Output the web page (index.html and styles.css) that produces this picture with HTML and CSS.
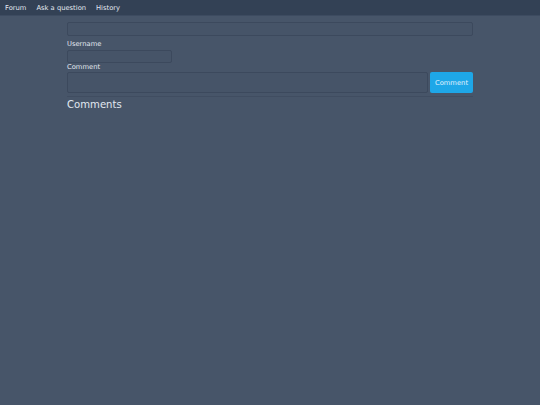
FILE: index.html
```html
<!DOCTYPE html>
<html>
<head>
<meta charset="utf-8">
<link rel="stylesheet" href="styles.css">
</head>
<body>
<nav class="nav">
  <a class="nav-link" href="#">Forum</a>
  <a class="nav-link" href="#">Ask a question</a>
  <a class="nav-link" href="#">History</a>
</nav>
<main class="container">
  <input class="field field-full" type="text">
  <label class="label">Username</label>
  <input class="field field-user" type="text">
  <label class="label label-tight">Comment</label>
  <div class="comment-row">
    <textarea class="field comment-box"></textarea>
    <button class="btn">Comment</button>
  </div>
  <h2 class="heading">Comments</h2>
</main>
</body>
</html>
```
FILE: styles.css
```css
html, body {
  margin: 0;
  padding: 0;
  height: 100%;
}
body {
  background: #475569;
  font-family: "DejaVu Sans", Verdana, sans-serif;
  font-size: 6.75px;
  color: #e2e8f0;
}
.nav {
  display: flex;
  align-items: center;
  height: 16px;
  background: #334155;
  border-bottom: 1px solid #3d4b60;
  box-sizing: border-box;
}
.nav-link {
  color: #e2e8f0;
  text-decoration: none;
  padding: 0 5px;
  line-height: 16px;
}
.container {
  width: 406px;
  margin: 0 auto;
  padding-top: 6px;
  display: flex;
  flex-direction: column;
  align-items: flex-start;
}
.field {
  display: block;
  box-sizing: border-box;
  background: #465468;
  border: 1px solid #3c495d;
  border-radius: 2px;
  margin: 0;
  padding: 0 3px;
  font: inherit;
  color: #e2e8f0;
  outline: none;
}
.field-full {
  width: 406px;
  height: 14px;
}
.label {
  display: block;
  margin-top: 4px;
  line-height: 9px;
  height: 9px;
}
.label-tight {
  margin-top: 0;
}
.field-user {
  width: 105px;
  height: 13px;
  margin-top: 1px;
}
.comment-row {
  display: flex;
  align-items: center;
  width: 406px;
  gap: 2px;
  padding-bottom: 3px;
  border-bottom: 1px solid #404d61;
}
.comment-box {
  flex: 1;
  height: 21px;
  resize: none;
}
.btn {
  width: 43px;
  height: 21px;
  background: #1ea7e8;
  color: #e0f2fe;
  border: none;
  border-radius: 2px;
  font: inherit;
  padding: 0;
  cursor: pointer;
}
.heading {
  font-size: 10.1px;
  font-weight: normal;
  margin: 2px 0 0 0;
  line-height: 12px;
  color: #e2e8f0;
}
```
